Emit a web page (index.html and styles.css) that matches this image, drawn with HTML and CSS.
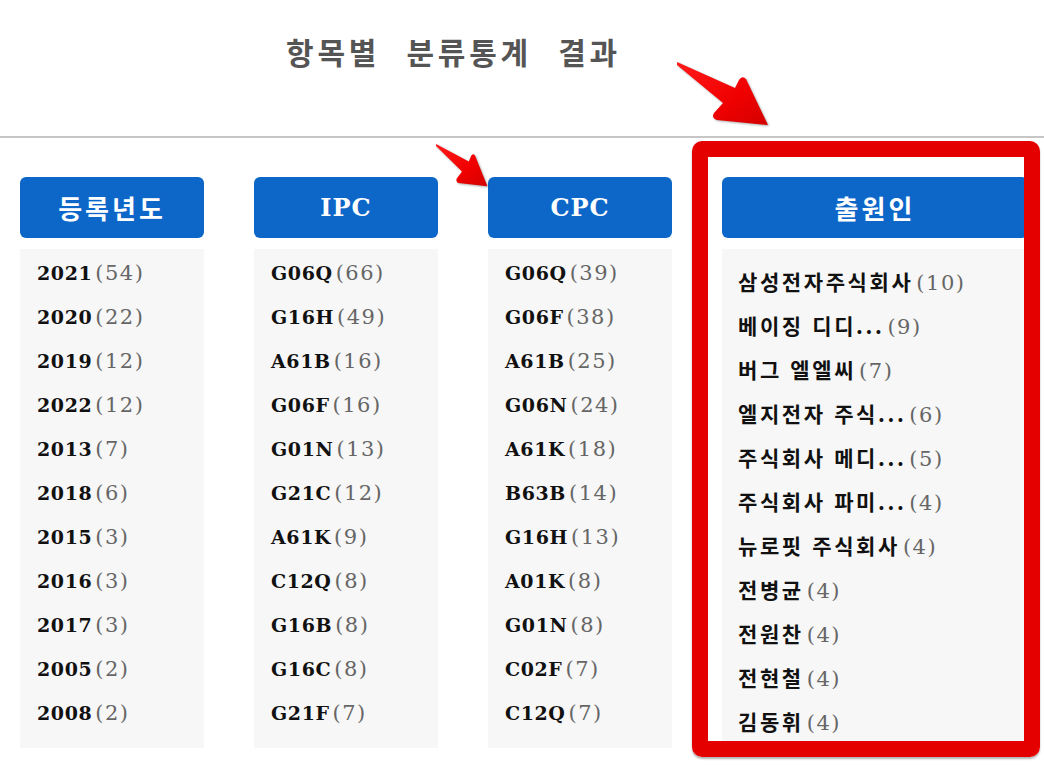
FILE: index.html
```html
<!DOCTYPE html>
<html lang="ko">
<head>
<meta charset="utf-8">
<title>항목별 분류통계 결과</title>
<link rel="stylesheet" href="styles.css">
</head>
<body>
<header class="top">
  <h1 class="title">항목별 분류통계 결과</h1>
</header>
<div class="rule"></div>
<main class="cols">
  <section class="col">
    <h2 class="col-head"><span class="ko">등록년도</span></h2>
    <div class="list">
      <ul class="rows">
        <li><b>2021</b><span class="n">(54)</span></li>
        <li><b>2020</b><span class="n">(22)</span></li>
        <li><b>2019</b><span class="n">(12)</span></li>
        <li><b>2022</b><span class="n">(12)</span></li>
        <li><b>2013</b><span class="n">(7)</span></li>
        <li><b>2018</b><span class="n">(6)</span></li>
        <li><b>2015</b><span class="n">(3)</span></li>
        <li><b>2016</b><span class="n">(3)</span></li>
        <li><b>2017</b><span class="n">(3)</span></li>
        <li><b>2005</b><span class="n">(2)</span></li>
        <li><b>2008</b><span class="n">(2)</span></li>
        <li><b>2010</b><span class="n">(2)</span></li>
      </ul>
    </div>
  </section>
  <section class="col">
    <h2 class="col-head">IPC</h2>
    <div class="list">
      <ul class="rows">
        <li><b>G06Q</b><span class="n">(66)</span></li>
        <li><b>G16H</b><span class="n">(49)</span></li>
        <li><b>A61B</b><span class="n">(16)</span></li>
        <li><b>G06F</b><span class="n">(16)</span></li>
        <li><b>G01N</b><span class="n">(13)</span></li>
        <li><b>G21C</b><span class="n">(12)</span></li>
        <li><b>A61K</b><span class="n">(9)</span></li>
        <li><b>C12Q</b><span class="n">(8)</span></li>
        <li><b>G16B</b><span class="n">(8)</span></li>
        <li><b>G16C</b><span class="n">(8)</span></li>
        <li><b>G21F</b><span class="n">(7)</span></li>
        <li><b>B01J</b><span class="n">(6)</span></li>
      </ul>
    </div>
  </section>
  <section class="col">
    <h2 class="col-head">CPC</h2>
    <div class="list">
      <ul class="rows">
        <li><b>G06Q</b><span class="n">(39)</span></li>
        <li><b>G06F</b><span class="n">(38)</span></li>
        <li><b>A61B</b><span class="n">(25)</span></li>
        <li><b>G06N</b><span class="n">(24)</span></li>
        <li><b>A61K</b><span class="n">(18)</span></li>
        <li><b>B63B</b><span class="n">(14)</span></li>
        <li><b>G16H</b><span class="n">(13)</span></li>
        <li><b>A01K</b><span class="n">(8)</span></li>
        <li><b>G01N</b><span class="n">(8)</span></li>
        <li><b>C02F</b><span class="n">(7)</span></li>
        <li><b>C12Q</b><span class="n">(7)</span></li>
        <li><b>G16B</b><span class="n">(7)</span></li>
      </ul>
    </div>
  </section>
  <section class="col col-wide">
    <h2 class="col-head"><span class="ko">출원인</span></h2>
    <div class="list">
      <ul class="rows rows-scrolled">
        <li><b class="ko">엘지전자</b><span class="n">(11)</span></li>
        <li><b class="ko">삼성전자주식회사</b><span class="n">(10)</span></li>
        <li><b class="ko">베이징 디디...</b><span class="n">(9)</span></li>
        <li><b class="ko">버그 엘엘씨</b><span class="n">(7)</span></li>
        <li><b class="ko">엘지전자 주식...</b><span class="n">(6)</span></li>
        <li><b class="ko">주식회사 메디...</b><span class="n">(5)</span></li>
        <li><b class="ko">주식회사 파미...</b><span class="n">(4)</span></li>
        <li><b class="ko">뉴로핏 주식회사</b><span class="n">(4)</span></li>
        <li><b class="ko">전병균</b><span class="n">(4)</span></li>
        <li><b class="ko">전원찬</b><span class="n">(4)</span></li>
        <li><b class="ko">전현철</b><span class="n">(4)</span></li>
        <li><b class="ko">김동휘</b><span class="n">(4)</span></li>
        <li><b class="ko">이상훈</b><span class="n">(3)</span></li>
      </ul>
    </div>
  </section>
</main>

<div class="highlight"></div>

<svg class="arrow arrow-big" viewBox="0 0 92 64" preserveAspectRatio="none" aria-hidden="true">
  <defs>
    <linearGradient id="ag1" x1="0" y1="0" x2="1" y2="1">
      <stop offset="0" stop-color="#ff1a1a"/>
      <stop offset="0.6" stop-color="#f00000"/>
      <stop offset="1" stop-color="#d40000"/>
    </linearGradient>
  </defs>
  <path d="M0,0 L58,26 L62,18 Q65,13 69,17 L91,63 L40,58 Q34,56 37,51 L46,41 L0,3 Z" fill="url(#ag1)"/>
</svg>
<svg class="arrow arrow-small" viewBox="0 0 92 64" preserveAspectRatio="none" aria-hidden="true">
  <defs>
    <linearGradient id="ag2" x1="0" y1="0" x2="1" y2="1">
      <stop offset="0" stop-color="#ff1a1a"/>
      <stop offset="0.6" stop-color="#f00000"/>
      <stop offset="1" stop-color="#d40000"/>
    </linearGradient>
  </defs>
  <path d="M0,0 L58,26 L62,18 Q65,13 69,17 L91,63 L40,58 Q34,56 37,51 L46,41 L0,3 Z" fill="url(#ag2)"/>
</svg>
</body>
</html>
```

FILE: styles.css
```css
html, body {
  margin: 0;
  padding: 0;
  background: #ffffff;
}

body {
  position: relative;
  width: 1044px;
  height: 768px;
  overflow: hidden;
  font-family: "DejaVu Serif", "Noto Sans CJK KR", serif;
  color: #111111;
}

.top {
  box-sizing: border-box;
  height: 136px;
  padding: 33px 0 0 286px;
}

.title {
  margin: 0;
  font-family: "Noto Sans CJK KR", sans-serif;
  font-weight: 700;
  font-size: 30px;
  line-height: 36px;
  letter-spacing: 3.8px;
  word-spacing: 14px;
  color: #555555;
}

.rule {
  height: 2px;
  background: #c6c6c6;
}

.cols {
  display: flex;
  gap: 50px;
  padding: 39px 0 0 20px;
}

.col {
  width: 184px;
  flex: none;
}

.col-wide {
  width: 306px;
}

.col-head {
  margin: 0;
  height: 61px;
  border-radius: 6px;
  background: #0d67c9;
  color: #ffffff;
  font-family: "DejaVu Serif", "Noto Sans CJK KR", serif;
  font-weight: 700;
  font-size: 24px;
  letter-spacing: 1px;
  display: flex;
  align-items: center;
  justify-content: center;
}

.col-head .ko {
  font-family: "Noto Sans CJK KR", sans-serif;
  font-size: 26px;
  letter-spacing: 3px;
}

.list {
  margin-top: 11px;
  height: 499px;
  overflow: hidden;
  background: #f7f7f7;
}

.rows {
  list-style: none;
  margin: 0;
  padding: 2px 0 0 17px;
}

.rows-scrolled {
  margin-top: -36px;
  padding-left: 16px;
}

.rows li {
  height: 44px;
  line-height: 44px;
  white-space: nowrap;
}

.rows b {
  font-weight: 700;
  font-size: 19px;
  letter-spacing: 0.6px;
  color: #111111;
}

.rows b.ko {
  font-family: "Noto Sans CJK KR", sans-serif;
  font-size: 21px;
  letter-spacing: 2.6px;
}

.rows .n {
  margin-left: 3px;
  font-size: 21px;
  letter-spacing: 1.5px;
  color: #666666;
}

.highlight {
  position: absolute;
  left: 692px;
  top: 141px;
  width: 348px;
  height: 616px;
  box-sizing: border-box;
  border: 16px solid #e50000;
  border-radius: 10px;
  box-shadow: 0 2px 2px rgba(0, 0, 0, 0.3);
}

.arrow {
  position: absolute;
  filter: drop-shadow(1px 1.5px 1px rgba(0, 0, 0, 0.35));
}

.arrow-big {
  left: 677px;
  top: 62px;
  width: 92px;
  height: 64px;
}

.arrow-small {
  left: 436px;
  top: 144px;
  width: 52px;
  height: 43px;
}
```
